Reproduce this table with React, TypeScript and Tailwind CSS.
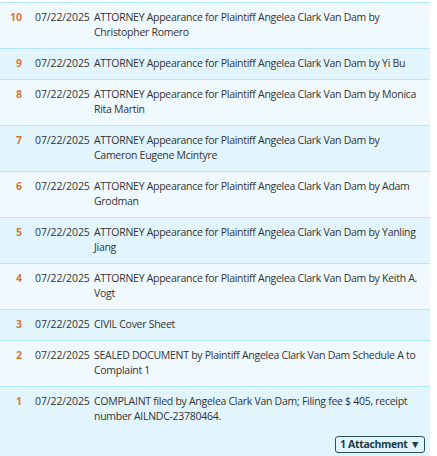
const entries = [
  { n: 10, date: '07/22/2025', text: 'ATTORNEY Appearance for Plaintiff Angelea Clark Van Dam by Christopher Romero' },
  { n: 9, date: '07/22/2025', text: 'ATTORNEY Appearance for Plaintiff Angelea Clark Van Dam by Yi Bu' },
  { n: 8, date: '07/22/2025', text: 'ATTORNEY Appearance for Plaintiff Angelea Clark Van Dam by Monica Rita Martin' },
  { n: 7, date: '07/22/2025', text: 'ATTORNEY Appearance for Plaintiff Angelea Clark Van Dam by Cameron Eugene Mcintyre' },
  { n: 6, date: '07/22/2025', text: 'ATTORNEY Appearance for Plaintiff Angelea Clark Van Dam by Adam Grodman' },
  { n: 5, date: '07/22/2025', text: 'ATTORNEY Appearance for Plaintiff Angelea Clark Van Dam by Yanling Jiang' },
  { n: 4, date: '07/22/2025', text: 'ATTORNEY Appearance for Plaintiff Angelea Clark Van Dam by Keith A. Vogt' },
  { n: 3, date: '07/22/2025', text: 'CIVIL Cover Sheet' },
  { n: 2, date: '07/22/2025', text: 'SEALED DOCUMENT by Plaintiff Angelea Clark Van Dam Schedule A to Complaint 1' },
  { n: 1, date: '07/22/2025', text: 'COMPLAINT filed by Angelea Clark Van Dam; Filing fee $ 405, receipt number AILNDC-23780464.', attachments: 1 },
];

export default function App() {
  return (
    <div className="min-h-[456px] bg-white pt-[2px]" style={{ fontFamily: '"Open Sans", "Noto Sans", sans-serif' }}>
      <div className="w-[430px] border-b border-[#b3e5fc]">
        {entries.map((e, i) => (
          <div
            key={e.n}
            className={`flex border-t border-[#b3e5fc] pt-[7px] pb-[8px] text-[10.5px] leading-[15px] text-[#333] ${
              i % 2 === 0 ? 'bg-[#f0f9fe]' : 'bg-[#e2f5fd]'
            }`}
          >
            <div className="w-[22px] shrink-0 text-right font-bold text-[#d2773b]">{e.n}</div>
            <div className="w-[59px] shrink-0 pl-[13px] tracking-[-0.1px]">{e.date}</div>
            <div className="flex-1 pl-[13px] pr-[9px]">
              <div className="tracking-[-0.28px]">{e.text}</div>
              {e.attachments && (
                <div className="mt-[12px] -mr-[4px] flex justify-end">
                  <button className="rounded-[3px] border border-[#2c4f5c] px-[4px] text-[10.5px] font-bold leading-[15px] tracking-[-0.35px] text-[#1d3d4a]">
                    {e.attachments} Attachment ▼
                  </button>
                </div>
              )}
            </div>
          </div>
        ))}
      </div>
    </div>
  );
}
